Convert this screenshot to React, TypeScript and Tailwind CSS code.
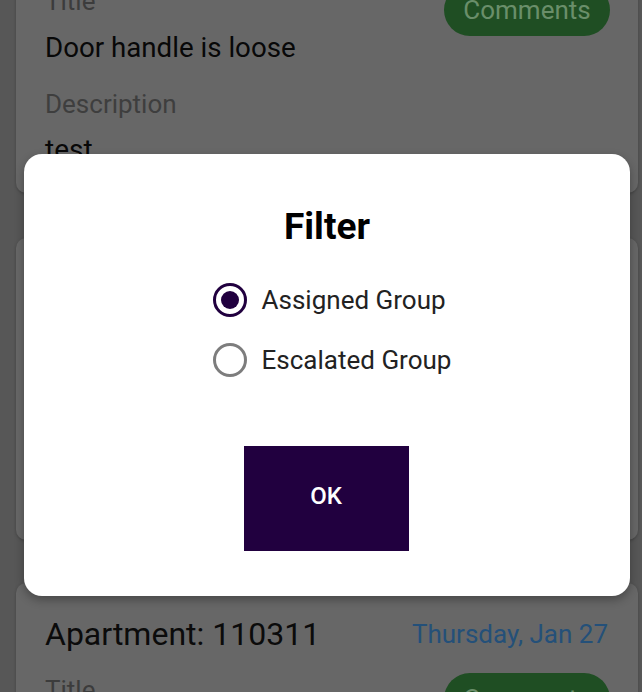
import React from "react";

type CardProps = {
  apartment: string;
  date: string;
  title: string;
  description: string;
  className?: string;
};

function TicketCard({ apartment, date, title, description, className }: CardProps) {
  return (
    <div
      className={`ml-[16px] mr-[4px] rounded-[10px] bg-[#676767] px-[29px] pt-[31px] shadow-[0_1px_3px_rgba(0,0,0,0.25)] ${className ?? ""}`}
    >
      <div className="flex h-[40px] items-center justify-between">
        <span className="text-[32px] leading-[40px] text-[#0b0b0b]">{apartment}</span>
        <span className="mr-[1px] text-[26px] leading-[40px] text-[#245079]">{date}</span>
      </div>
      <div className="flex items-start justify-between">
        <div className="flex flex-col">
          <span className="mt-[18px] text-[26px] leading-[36px] text-[#3c3c3c]">Title</span>
          <span className="mt-[11px] text-[27.7px] leading-[36px] text-[#080808]">{title}</span>
          <span className="mt-[20px] text-[26px] leading-[36px] text-[#3e3e3e]">Description</span>
          <span className="mt-[10px] text-[28px] leading-[36px] text-[#080808]">{description}</span>
        </div>
        <div className="mr-[-1px] mt-[19px] flex h-[52px] w-[166px] items-center justify-center rounded-full bg-[#1f4e23] text-[26px] text-[#6a8e6a]">
          Comments
        </div>
      </div>
    </div>
  );
}

function Radio({ checked, label }: { checked: boolean; label: string }) {
  return (
    <div className="flex h-[60px] items-center gap-[15px]">
      {checked ? (
        <span className="flex h-[34px] w-[34px] shrink-0 items-center justify-center rounded-full border-[3.5px] border-[#21003f]">
          <span className="h-[18px] w-[18px] rounded-full bg-[#21003f]" />
        </span>
      ) : (
        <span className="h-[34px] w-[34px] shrink-0 rounded-full border-[3px] border-[#7d7d7d]" />
      )}
      <span className="text-[26px] leading-[34px] text-[#222222]">{label}</span>
    </div>
  );
}

export default function App() {
  return (
    <div
      className="relative h-[692px] w-[642px] overflow-hidden bg-[#575757]"
      style={{ fontFamily: "Roboto, 'Noto Sans', sans-serif" }}
    >
      <div className="flex flex-col">
        <TicketCard
          className="mt-[-106px] pb-[25px]"
          apartment="Apartment: 110311"
          date="Thursday, Jan 27"
          title="Door handle is loose"
          description="test"
        />
        <TicketCard
          className="mt-[45px] pb-[28px]"
          apartment="Apartment: 110311"
          date="Thursday, Jan 27"
          title="Door handle is loose"
          description="test"
        />
        <TicketCard
          className="mt-[43px] pb-[25px]"
          apartment="Apartment: 110311"
          date="Thursday, Jan 27"
          title="Door handle is loose"
          description="test"
        />
      </div>

      <div className="absolute left-[24px] top-[154px] flex h-[442px] w-[606px] flex-col items-center rounded-[18px] bg-white pt-[51px] shadow-[0_4px_10px_rgba(0,0,0,0.3)]">
        <h2 className="h-[44px] text-[37px] font-bold leading-[44px] text-black">Filter</h2>
        <div className="ml-[10px] mt-[21px] flex flex-col">
          <Radio checked label="Assigned Group" />
          <Radio checked={false} label="Escalated Group" />
        </div>
        <button className="mr-[2px] mt-[56px] flex h-[105px] w-[165px] items-center justify-center bg-[#21003f] pb-[6px] text-[24px] font-medium text-white">
          OK
        </button>
      </div>
    </div>
  );
}
